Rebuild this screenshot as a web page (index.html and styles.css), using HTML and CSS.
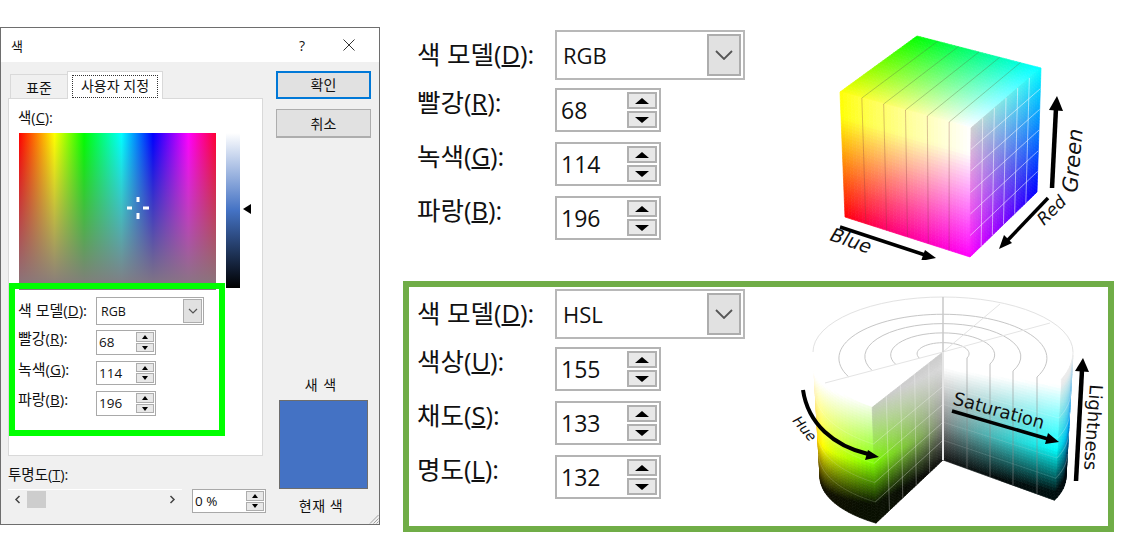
FILE: index.html
```html
<!doctype html>
<html lang="ko">
<head>
<meta charset="UTF-8">
<title>색</title>
<link rel="stylesheet" href="styles.css">
<script src="mesh.js"></script>
</head>

<body>
<div class="page">

  <div class="dialog">
    <div class="titlebar">
      <span class="title">색</span>
      <span class="help">?</span>
      <svg class="close" width="12" height="12" viewBox="0 0 12 12"><path d="M0.5 0.5L11.5 11.5M11.5 0.5L0.5 11.5"/></svg>
    </div>
    <div class="dialog-body">
      <div class="left-col">
        <div class="tabs">
          <div class="tab">표준</div>
          <div class="tab tab-active"><span class="tab-focus">사용자 지정</span></div>
        </div>
        <div class="pane">
          <div class="pane-label">색(<u>C</u>):</div>
          <div class="picker">
            <div class="spectrum">
              <svg class="cross" width="22" height="22" viewBox="0 0 22 22"><path d="M11 0V5M11 16V22M0 11H5M16 11H22"/></svg>
            </div>
            <div class="lum"></div>
            <div class="lum-arrow"></div>
          </div>
          <div class="form form-small">
            <div class="row">
              <label>색 모델(<u>D</u>):</label>
              <div class="select"><span>RGB</span><div class="select-btn"><svg width="10" height="6" viewBox="0 0 10 6"><path d="M1 1L5 5L9 1"/></svg></div></div>
            </div>
            <div class="row">
              <label>빨강(<u>R</u>):</label>
              <div class="spin"><span>68</span><div class="spin-btns"><i class="up"></i><i class="down"></i></div></div>
            </div>
            <div class="row">
              <label>녹색(<u>G</u>):</label>
              <div class="spin"><span>114</span><div class="spin-btns"><i class="up"></i><i class="down"></i></div></div>
            </div>
            <div class="row">
              <label>파랑(<u>B</u>):</label>
              <div class="spin"><span>196</span><div class="spin-btns"><i class="up"></i><i class="down"></i></div></div>
            </div>
          </div>
          <div class="highlight"></div>
        </div>
        <div class="alpha-label">투명도(<u>T</u>):</div>
        <div class="alpha-row">
          <div class="scrollbar">
            <svg class="scroll-arrow" width="7" height="9" viewBox="0 0 7 9"><path d="M5.5 1L2 4.5L5.5 8"/></svg>
            <div class="thumb"></div>
            <svg class="scroll-arrow scroll-next" width="7" height="9" viewBox="0 0 7 9"><path d="M1.5 1L5 4.5L1.5 8"/></svg>
          </div>
          <div class="form-small">
            <div class="spin spin-alpha"><span>0 %</span><div class="spin-btns"><i class="up"></i><i class="down"></i></div></div>
          </div>
        </div>
      </div>
      <div class="right-col">
        <div class="btn btn-default">확인</div>
        <div class="btn">취소</div>
        <div class="new-label">새 색</div>
        <div class="swatch"></div>
        <div class="cur-label">현재 색</div>
      </div>
    </div>
    <svg class="grip" width="10" height="10" viewBox="0 0 10 10"><path d="M9.5 1L1 9.5M9.5 4.5L4.5 9.5M9.5 7.5L7.5 9.5"/></svg>
  </div>

  <div class="right">
    <div class="panel">
      <div class="form form-large form-rgb">
        <div class="row">
          <label>색 모델(<u>D</u>):</label>
          <div class="select"><span>RGB</span><div class="select-btn"><svg width="18" height="10" viewBox="0 0 18 10"><path d="M1 1L9 9L17 1"/></svg></div></div>
        </div>
        <div class="row">
          <label>빨강(<u>R</u>):</label>
          <div class="spin"><span>68</span><div class="spin-btns"><i class="up"></i><i class="down"></i></div></div>
        </div>
        <div class="row">
          <label>녹색(<u>G</u>):</label>
          <div class="spin"><span>114</span><div class="spin-btns"><i class="up"></i><i class="down"></i></div></div>
        </div>
        <div class="row">
          <label>파랑(<u>B</u>):</label>
          <div class="spin"><span>196</span><div class="spin-btns"><i class="up"></i><i class="down"></i></div></div>
        </div>
      </div>
      <svg class="cube" width="300" height="240" viewBox="800 20 300 240">
        <g id="cubeMesh"></g>
        <path class="arrow" d="M840 227L925 255"/>
        <polygon points="936,258 921,261 925,250"/>
        <text class="axis axis-oblique" font-size="19" transform="translate(829,240) rotate(19)">Blue</text>
        <path class="arrow" d="M1048 198L1007 241"/>
        <polygon points="999,249 1004,235 1012,243"/>
        <text class="axis axis-oblique" font-size="17" transform="translate(1044,226) rotate(-45)">Red</text>
        <path class="arrow arrow-thick" d="M1052 188L1056 108"/>
        <polygon points="1057,96 1063,111 1049,110"/>
        <text class="axis axis-oblique" font-size="21" transform="translate(1077,193) rotate(-85)">Green</text>
      </svg>
    </div>

    <div class="panel panel-hsl">
      <div class="form form-large form-hsl">
        <div class="row">
          <label>색 모델(<u>D</u>):</label>
          <div class="select"><span>HSL</span><div class="select-btn"><svg width="18" height="10" viewBox="0 0 18 10"><path d="M1 1L9 9L17 1"/></svg></div></div>
        </div>
        <div class="row">
          <label>색상(<u>U</u>):</label>
          <div class="spin"><span>155</span><div class="spin-btns"><i class="up"></i><i class="down"></i></div></div>
        </div>
        <div class="row">
          <label>채도(<u>S</u>):</label>
          <div class="spin"><span>133</span><div class="spin-btns"><i class="up"></i><i class="down"></i></div></div>
        </div>
        <div class="row">
          <label>명도(<u>L</u>):</label>
          <div class="spin"><span>132</span><div class="spin-btns"><i class="up"></i><i class="down"></i></div></div>
        </div>
      </div>
      <svg class="cyl" width="318" height="238" viewBox="790 287 318 238">
        <g id="cylMesh"></g>
        <path class="arrow arrow-hue" d="M803 390C808 424 834 446 868 454"/>
        <polygon points="879,457 865,460 868,450"/>
        <text class="axis axis-oblique" font-size="14" transform="translate(792,421) rotate(50)">Hue</text>
        <path class="arrow" d="M952 411L1048 439"/>
        <polygon points="1059,442 1045,444 1048,433"/>
        <text class="axis" font-size="18" transform="translate(952,404) rotate(15.5)">Saturation</text>
        <path class="arrow arrow-thick" d="M1076 481L1082 370"/>
        <polygon points="1083,358 1089,372 1075,371"/>
        <text class="axis" font-size="18" transform="translate(1090,384) rotate(94)">Lightness</text>
      </svg>
    </div>
  </div>

</div>
</body>
</html>
```

FILE: styles.css
```css
body,div,label,span{margin:0;padding:0;}
body{background:#fff;color:#111;font-family:"Open Sans","Noto Sans CJK KR",sans-serif;overflow:hidden;}
u{text-underline-offset:1px;}

.page{display:flex;align-items:flex-start;width:1134px;height:535px;}

/* dialog */
.dialog{position:relative;box-sizing:border-box;width:380px;height:498px;margin-top:27px;background:#f0f0f0;border:1px solid #6e6e6e;font-size:14px;}
.titlebar{display:flex;align-items:center;height:34px;background:#fff;padding-left:10px;}
.title{font-size:13px;}
.help{margin-left:276px;font-size:14px;}
.close{margin-left:38px;}
.close path{fill:none;stroke:#333;stroke-width:1;}
.dialog-body{display:flex;padding:9px 0 0 7px;}
.left-col{width:260px;}
.right-col{width:95px;margin-left:8px;display:flex;flex-direction:column;align-items:center;}

.tabs{display:flex;align-items:flex-end;height:28px;padding-left:2px;margin-bottom:-1px;position:relative;z-index:1;}
.tab{box-sizing:border-box;width:57px;height:25px;line-height:25px;text-align:center;border:1px solid #d9d9d9;border-bottom:none;border-right:none;}
.tab-active{width:96px;height:28px;background:#fff;border-right:1px solid #d9d9d9;padding:3px 4px 0;line-height:20px;}
.tab-focus{display:block;height:21px;border:1px dotted #333;}

.pane{position:relative;box-sizing:border-box;width:255px;height:358px;background:#fff;border:1px solid #d9d9d9;padding:11px 0 0 9px;}
.pane-label{height:16px;line-height:16px;margin-bottom:7px;}
.picker{display:flex;align-items:flex-start;padding-left:1px;}
.spectrum{position:relative;width:197px;height:157px;background:linear-gradient(to bottom,rgba(138,128,128,0),#85797f),linear-gradient(to right,#f00,#ff0 18%,#0f0 33%,#0ff 52%,#00f 68%,#f0f 86%,#f03);}
.cross{position:absolute;left:108px;top:64px;}
.cross path{fill:none;stroke:#fff;stroke-width:3;}
.lum{width:14px;height:155px;margin-left:10px;background:linear-gradient(to bottom,#fff,#4472c4 50%,#000);}
.lum-arrow{margin:71px 0 0 3px;border-style:solid;border-width:5px 8px 5px 0;border-color:transparent #000 transparent transparent;}
.highlight{position:absolute;left:0;top:184px;width:216px;height:153px;box-sizing:border-box;border:6px solid #0f0;}

/* shared form rows */
.row{display:flex;align-items:flex-start;}
.select,.spin{box-sizing:border-box;display:flex;align-items:center;background:#fff;}
.spin-btns{display:flex;flex-direction:column;margin-left:auto;}
.spin-btns i{display:flex;align-items:center;justify-content:center;box-sizing:border-box;background:#e8e8e8;}
.spin-btns i::after{content:"";border-style:solid;border-color:transparent;}
.select-btn{display:flex;align-items:center;justify-content:center;box-sizing:border-box;margin-left:auto;background:#e1e1e1;}
.select-btn path{fill:none;stroke:#555;}

.form-small{font-size:13.5px;}
.form-small .row{margin-bottom:6px;}
.form-small .row:first-child{margin-bottom:5px;}
.form-small label{width:78px;height:16px;line-height:16px;margin-top:5px;font-size:15px;}
.form-small .row + .row label{margin-top:0;}
.form-small .select{width:108px;height:28px;border:1px solid #a9a9a9;padding:1px 1px 1px 4px;font-size:12.5px;}
.form-small .select-btn{width:19px;height:24px;border:1px solid #adadad;}
.form-small .select-btn path{stroke-width:1.2;}
.form-small .spin{width:60px;height:24.5px;border:1px solid #a9a9a9;padding:1px 1px 1px 2px;}
.form-small .spin-btns{gap:1px;}
.form-small .spin-btns i{width:18px;height:9.5px;border:1px solid #adadad;}
.form-small .up::after{border-width:0 3.5px 4px;border-bottom-color:#000;}
.form-small .down::after{border-width:4px 3.5px 0;border-top-color:#000;}
.form{margin-top:7px;}

.pane-label,.alpha-label{font-size:14.5px;}
.alpha-label{height:16px;line-height:16px;margin-top:11px;}
.alpha-row{display:flex;align-items:flex-start;margin-top:6px;}
.scrollbar{display:flex;align-items:center;width:174px;height:19px;border-top:1px solid #fff;box-sizing:border-box;padding-left:6px;}
.scroll-arrow{flex:none;}
.scroll-arrow path{fill:none;stroke:#444;stroke-width:1.5;}
.scroll-next{margin-left:auto;margin-right:6px;}
.thumb{width:19px;height:17px;margin-left:6px;background:#cdcdcd;}
.spin-alpha{width:74px !important;margin-left:10px;height:24px !important;}

.btn{box-sizing:border-box;width:95px;height:29px;line-height:27px;text-align:center;background:#e1e1e1;border:1px solid #adadad;border-width:1px 1px 2px;}
.btn + .btn{margin-top:10px;}
.btn-default{height:28px;border:2px solid #0078d7;line-height:24px;}
.new-label{margin:239px 5px 0 0;height:16px;line-height:16px;letter-spacing:1px;}
.swatch{box-sizing:border-box;width:89px;height:89px;margin-top:7px;background:#4472c4;border:1px solid #6d6d6d;}
.cur-label{margin:9px 5px 0 0;height:16px;line-height:16px;letter-spacing:.5px;}
.grip{position:absolute;right:0;bottom:0;}
.grip path{fill:none;stroke:#a0a0a0;}

/* right side panels */
.right{width:711px;margin-left:23px;}
.panel{display:flex;align-items:flex-start;box-sizing:border-box;height:281px;padding-left:14px;}
.panel-hsl{height:251px;border:6px solid #70ad47;padding-left:8px;}
.form-large{font-size:23px;}
.form-rgb{margin-top:30px;}
.form-hsl{margin-top:2px;}
.form-large .row{margin-bottom:10px;}
.form-large .row:first-child{margin-bottom:8px;}
.form-large label{width:138px;height:32px;line-height:32px;margin-top:8px;font-size:25.5px;}
.form-large .row + .row label{margin-top:-2px;}
.form-large .select{width:190px;height:50px;border:2px solid #b8b8b8;padding:2px 2px 2px 6px;font-size:22px;}
.form-large .select-btn{width:34px;height:42px;border:2px solid #adadad;}
.form-large .select-btn path{stroke-width:1.8;}
.form-large .spin{width:106px;height:44px;border:2px solid #b4b4b4;padding:2px 2px 2px 4px;}
.form-large .spin-btns{gap:2px;}
.form-large .spin-btns i{width:30px;height:17px;border:2px solid #b0b0b0;}
.form-large .up::after{border-width:0 7px 6px;border-bottom-color:#000;}
.form-large .down::after{border-width:6px 7px 0;border-top-color:#000;}

.cube{flex:none;margin:20px 0 0 55px;}
.cyl{flex:none;margin-left:45px;}
.arrow{fill:none;stroke:#000;stroke-width:3.5;}
.arrow-hue{stroke-width:4;}
.arrow-thick{stroke-width:4.5;}
.axis{font-family:"DejaVu Sans",sans-serif;fill:#111;}
.axis-oblique{font-style:oblique;}
```

FILE: mesh.js
```js
window.onload = function (){
	var NS = "http://www.w3.org/2000/svg";

	function clamp(a){
		return a < 0 ? 0 : (a > 1 ? 1 : a);
	}
	function lerp(a, b, t){
		return a + (b - a) * t;
	}
	function hsl(h, s, l){
		function f(n){
			var k = (n + h / 30) % 12;
			var a = s * Math.min(l, 1 - l);
			return l - a * Math.max(-1, Math.min(k - 3, 9 - k, 1));
		}
		return [f(0), f(8), f(4)];
	}
	function css(c){
		return "rgb(" + Math.round(clamp(c[0]) * 255) + "," + Math.round(clamp(c[1]) * 255) + "," + Math.round(clamp(c[2]) * 255) + ")";
	}

	//small cells on a surface p(u,v), each filled with color(u,v)
	function mesh(g, p, color, nu, nv){
		var html = "";
		for(var i = 0; i < nu; i++){
			for(var j = 0; j < nv; j++){
				var u0 = i / nu, u1 = (i + 1) / nu, v0 = j / nv, v1 = (j + 1) / nv;
				var pts = [p(u0, v0), p(u1, v0), p(u1, v1), p(u0, v1)];
				var c = css(color((u0 + u1) / 2, (v0 + v1) / 2));
				html += '<polygon points="' + pts.join(" ") + '" fill="' + c + '" stroke="' + c + '" stroke-width="0.7"/>';
			}
		}
		g.insertAdjacentHTML("beforeend", html);
	}
	function line(g, p, fixU, val, stroke, width){
		var d = "";
		for(var i = 0; i <= 30; i++){
			var t = i / 30;
			var q = fixU ? p(val, t) : p(t, val);
			d += (i ? "L" : "M") + q[0] + " " + q[1];
		}
		var el = document.createElementNS(NS, "path");
		el.setAttribute("d", d);
		el.setAttribute("fill", "none");
		el.setAttribute("stroke", stroke);
		el.setAttribute("stroke-width", width);
		g.appendChild(el);
	}
	function quad(a, b, c, d){
		return function (u, v){
			return [lerp(lerp(a[0], b[0], u), lerp(d[0], c[0], u), v), lerp(lerp(a[1], b[1], u), lerp(d[1], c[1], u), v)];
		};
	}
	function mix4(a, b, c, d, u, v){
		var out = [];
		for(var i = 0; i < 3; i++) out[i] = lerp(lerp(a[i], b[i], u), lerp(d[i], c[i], u), v);
		return out;
	}

	//RGB cube
	var cube = document.getElementById("cubeMesh");
	var top = quad([840,92], [917,36], [1041,68], [971,128]);
	var left = quad([840,92], [971,128], [970,257], [845,217]);
	var right = quad([971,128], [1041,68], [1037,192], [970,257]);

	mesh(cube, top, function (u, v){
		return mix4([1,1,0], [0,1,0], [0,1,1], [1,1,1], u, Math.min(1, v * 1.05));
	}, 36, 36);
	mesh(cube, left, function (u, v){
		return mix4([1,1,0], [1,1,1], [1,0,1], [1,0,0], Math.pow(u, 0.8), clamp((v - 0.2) / 0.8));
	}, 36, 36);
	mesh(cube, right, function (u, v){
		var c = mix4([1,1,1], [0,1,1], [0,0,1], [1,0,1], u, v);
		var s = 0.82 + 0.18 * Math.max(u, v);
		return [c[0] * s, c[1] * s, c[2] * s];
	}, 36, 36);
	for(var n = 1; n < 6; n++){
		line(cube, top, false, n / 6, "rgba(90,110,60,0.35)", 1);
		line(cube, left, true, n / 6, "rgba(130,50,50,0.3)", 1);
		line(cube, right, true, n / 6, "rgba(255,255,255,0.55)", 1);
		line(cube, right, false, n / 6, "rgba(255,255,255,0.55)", 1);
	}

	//HSL cylinder
	var cyl = document.getElementById("cylMesh");
	var A = 123 * Math.PI / 180, B = 25 * Math.PI / 180;
	function rim(t, v){
		var x = lerp(943 + 130 * Math.cos(t), 943 + 123 * Math.cos(t), v);
		var y = lerp(352 + 66 * Math.sin(t), 477 + 55 * Math.sin(t), v);
		return [x, y];
	}
	function light(v){
		if(v < 0.15) return 1;
		if(v < 0.68) return 1 - (v - 0.15) / 0.53 * 0.5;
		return Math.max(0.03, 0.5 - (v - 0.68) / 0.32 * 0.42);
	}
	var sideL = function (u, v){ return rim(lerp(Math.PI, A, u), v); };
	var sideR = function (u, v){ return rim(lerp(B, 0, u), v); };
	var cutL = quad([943,352], rim(A, 0), rim(A, 1), [943,460]);
	var cutR = quad([943,352], rim(B, 0), rim(B, 1), [943,460]);

	mesh(cyl, sideL, function (u, v){ return hsl(46 + u * 44, 1, light(v + 0.2 * u)); }, 24, 40);
	mesh(cyl, sideR, function (u, v){
		var c = hsl(180 + u * 22, 1, light(v + 0.1));
		return [c[0] * 0.92, c[1] * 0.92, c[2] * 0.92];
	}, 8, 40);
	mesh(cyl, cutL, function (u, v){
		var c = hsl(90, u, light(v + 0.2 * u));
		var s = 0.8 + 0.2 * clamp(v / 0.6);
		return [c[0] * s, c[1] * s, c[2] * s];
	}, 30, 40);
	mesh(cyl, cutR, function (u, v){ return hsl(180, u, light(v + 0.1 * u)); }, 40, 40);

	for(n = 1; n < 5; n++){
		line(cyl, cutL, true, n / 5, "rgba(255,255,255,0.3)", 1);
		line(cyl, cutL, false, 0.15 + n / 6, "rgba(255,255,255,0.3)", 1);
		line(cyl, cutR, false, 0.15 + n / 6, "rgba(255,255,255,0.12)", 1);
		line(cyl, sideL, false, 0.15 + n / 6, "rgba(255,255,255,0.15)", 1);
		line(cyl, sideR, false, 0.15 + n / 6, "rgba(255,255,255,0.25)", 1);
	}

	//rings on the top, running down into the right cut
	var ends = [[967,358], [990,364], [1013,371], [1037,377]];
	var html = "";
	for(n = 1; n < 5; n++){
		var r = n / 5, e = ends[n - 1];
		var lx = 943 - 118 * r, ly = 352 + 31 * r;
		html += '<path d="M' + lx + " " + ly + "A" + (130 * r) + " " + (55 * r) + " 0 1 1 " + e[0] + " " + e[1] + '" fill="none" stroke="#c6c6c6"/>';
		var by = 460 + (e[0] - 943) * 0.357;
		html += '<path d="M' + e[0] + " " + e[1] + "L" + e[0] + " " + by + '" fill="none" stroke="rgba(140,140,140,0.55)"/>';
	}
	html += '<path d="M813 352A130 55 0 0 1 1073 352" fill="none" stroke="#e2e2e2"/>';
	html += '<path d="M943 352L825 383M943 352L1000 304M943 352L1050 323" stroke="#e4e4e4" fill="none"/>';
	html += '<path d="M943 297V352" stroke="#c8c8c8" stroke-width="1.5"/>';
	html += '<path d="M943 352V460" stroke="#e6e6e6" stroke-width="2"/>';
	cyl.insertAdjacentHTML("beforeend", html);
};
```
